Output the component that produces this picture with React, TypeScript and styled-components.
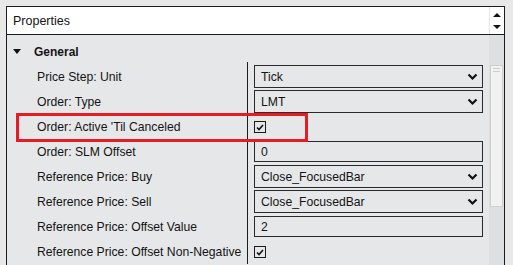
import React from 'react';
import styled, { createGlobalStyle } from 'styled-components';

const GlobalStyle = createGlobalStyle`
  html, body {
    margin: 0;
    padding: 0;
    background: #e8e8e8;
    overflow: hidden;
  }
  body {
    font-family: "Liberation Sans", Arial, sans-serif;
    font-size: 12.2px;
    color: #141414;
  }
`;

const Page = styled.div`
  padding: 6px 0 0 6px;
  height: 265px;
  box-sizing: border-box;
`;

const Frame = styled.div`
  position: relative;
  width: 499px;
  height: 270px;
  box-sizing: border-box;
  border: 1px solid #1c1c1c;
  border-bottom: none;
  background: #e6e7e8;
  display: flex;
  flex-direction: column;
`;

const Header = styled.div`
  display: flex;
  height: 27px;
  background: #ffffff;
  border-bottom: 1px solid #1c1c1c;
`;

const HeaderTitle = styled.div`
  flex: 1;
  display: flex;
  align-items: center;
  padding-left: 6px;
  font-size: 12.5px;
`;

const Spinner = styled.div`
  width: 14px;
  border-left: 1px solid #e4e4e4;
  display: flex;
  flex-direction: column;
  align-items: center;
  justify-content: center;
  gap: 8px;
`;

const Arrow = styled.div<{ up?: boolean }>`
  width: 0;
  height: 0;
  border-left: 4px solid transparent;
  border-right: 4px solid transparent;
  ${p => (p.up ? 'border-bottom: 4px solid #111;' : 'border-top: 4px solid #111;')}
`;

const Body = styled.div`
  flex: 1;
  display: flex;
`;

const Content = styled.div`
  flex: 1;
  display: flex;
  flex-direction: column;
`;

const SectionTitle = styled.div`
  display: flex;
  align-items: center;
  height: 25px;
  margin-top: 4px;
  padding-left: 6px;
  font-weight: bold;
  font-size: 12px;
`;

const Caret = styled.span`
  width: 0;
  height: 0;
  border-left: 4px solid transparent;
  border-right: 4px solid transparent;
  border-top: 5px solid #111;
  margin-right: 13px;
`;

const Columns = styled.div`
  display: flex;
  margin-top: -2px;
`;

const LabelColumn = styled.div`
  width: 240px;
  border-right: 1px solid #1c1c1c;
  padding-top: 2px;
`;

const ValueColumn = styled.div`
  flex: 1;
  padding-top: 2px;
`;

const LabelCell = styled.div`
  height: 25px;
  display: flex;
  align-items: center;
  padding-left: 30px;
  white-space: nowrap;
`;

const ValueCell = styled.div`
  height: 25px;
  display: flex;
  align-items: center;
  padding: 0 6px;
`;

const Select = styled.div`
  flex: 1;
  height: 23px;
  box-sizing: border-box;
  border: 1px solid #2a2a2a;
  display: flex;
  align-items: center;
  justify-content: space-between;
  padding: 0 4px 0 6px;
`;

const TextInput = styled.div`
  flex: 1;
  height: 21px;
  box-sizing: border-box;
  border: 1px solid #2a2a2a;
  display: flex;
  align-items: center;
  padding-left: 6px;
`;

const Check = styled.div`
  width: 12px;
  height: 12px;
  box-sizing: border-box;
  border: 1px solid #1a1a1a;
  display: flex;
  align-items: center;
  justify-content: center;
  margin-top: 1px;
`;

const ScrollTrack = styled.div`
  width: 15px;
  background: #dedfe0;
  padding-top: 30px;
  display: flex;
  justify-content: center;
`;

const Thumb = styled.div`
  width: 13px;
  height: 142px;
  box-sizing: border-box;
  background: #f1f1f1;
  border: 1px solid #cfcfcf;
  padding: 2px 2px 0;
`;

const Grip = styled.div`
  height: 1px;
  background: #cdcdcd;
  margin-bottom: 2px;
`;

const Highlight = styled.div`
  position: absolute;
  left: 9px;
  top: 106px;
  width: 292px;
  height: 29px;
  box-sizing: border-box;
  border: 3px solid #e51c24;
  pointer-events: none;
`;

const Chevron = () => (
  <svg width="11" height="8" viewBox="0 0 11 8">
    <path d="M1.5 1.5 L5.5 5.5 L9.5 1.5" fill="none" stroke="#111" strokeWidth="2.2" />
  </svg>
);

const Tick = () => (
  <svg width="8" height="7" viewBox="0 0 8 7">
    <path d="M1 3.5 L3 5.5 L7 1" fill="none" stroke="#111" strokeWidth="1.6" />
  </svg>
);

type Prop =
  | { label: string; kind: 'select'; value: string }
  | { label: string; kind: 'input'; value: string }
  | { label: string; kind: 'check' };

const props: Prop[] = [
  { label: 'Price Step: Unit', kind: 'select', value: 'Tick' },
  { label: 'Order: Type', kind: 'select', value: 'LMT' },
  { label: "Order: Active 'Til Canceled", kind: 'check' },
  { label: 'Order: SLM Offset', kind: 'input', value: '0' },
  { label: 'Reference Price: Buy', kind: 'select', value: 'Close_FocusedBar' },
  { label: 'Reference Price: Sell', kind: 'select', value: 'Close_FocusedBar' },
  { label: 'Reference Price: Offset Value', kind: 'input', value: '2' },
  { label: 'Reference Price: Offset Non-Negative', kind: 'check' },
];

const renderValue = (p: Prop) => {
  if (p.kind === 'select') {
    return (
      <Select>
        <span>{p.value}</span>
        <Chevron />
      </Select>
    );
  }
  if (p.kind === 'input') return <TextInput>{p.value}</TextInput>;
  return (
    <Check>
      <Tick />
    </Check>
  );
};

export default function App() {
  return (
    <Page>
      <GlobalStyle />
      <Frame>
        <Header>
          <HeaderTitle>Properties</HeaderTitle>
          <Spinner>
            <Arrow up />
            <Arrow />
          </Spinner>
        </Header>
        <Body>
          <Content>
            <SectionTitle>
              <Caret />
              General
            </SectionTitle>
            <Columns>
              <LabelColumn>
                {props.map(p => (
                  <LabelCell key={p.label}>{p.label}</LabelCell>
                ))}
              </LabelColumn>
              <ValueColumn>
                {props.map(p => (
                  <ValueCell key={p.label}>{renderValue(p)}</ValueCell>
                ))}
              </ValueColumn>
            </Columns>
          </Content>
          <ScrollTrack>
            <Thumb>
              <Grip />
              <Grip />
            </Thumb>
          </ScrollTrack>
        </Body>
        <Highlight />
      </Frame>
    </Page>
  );
}
